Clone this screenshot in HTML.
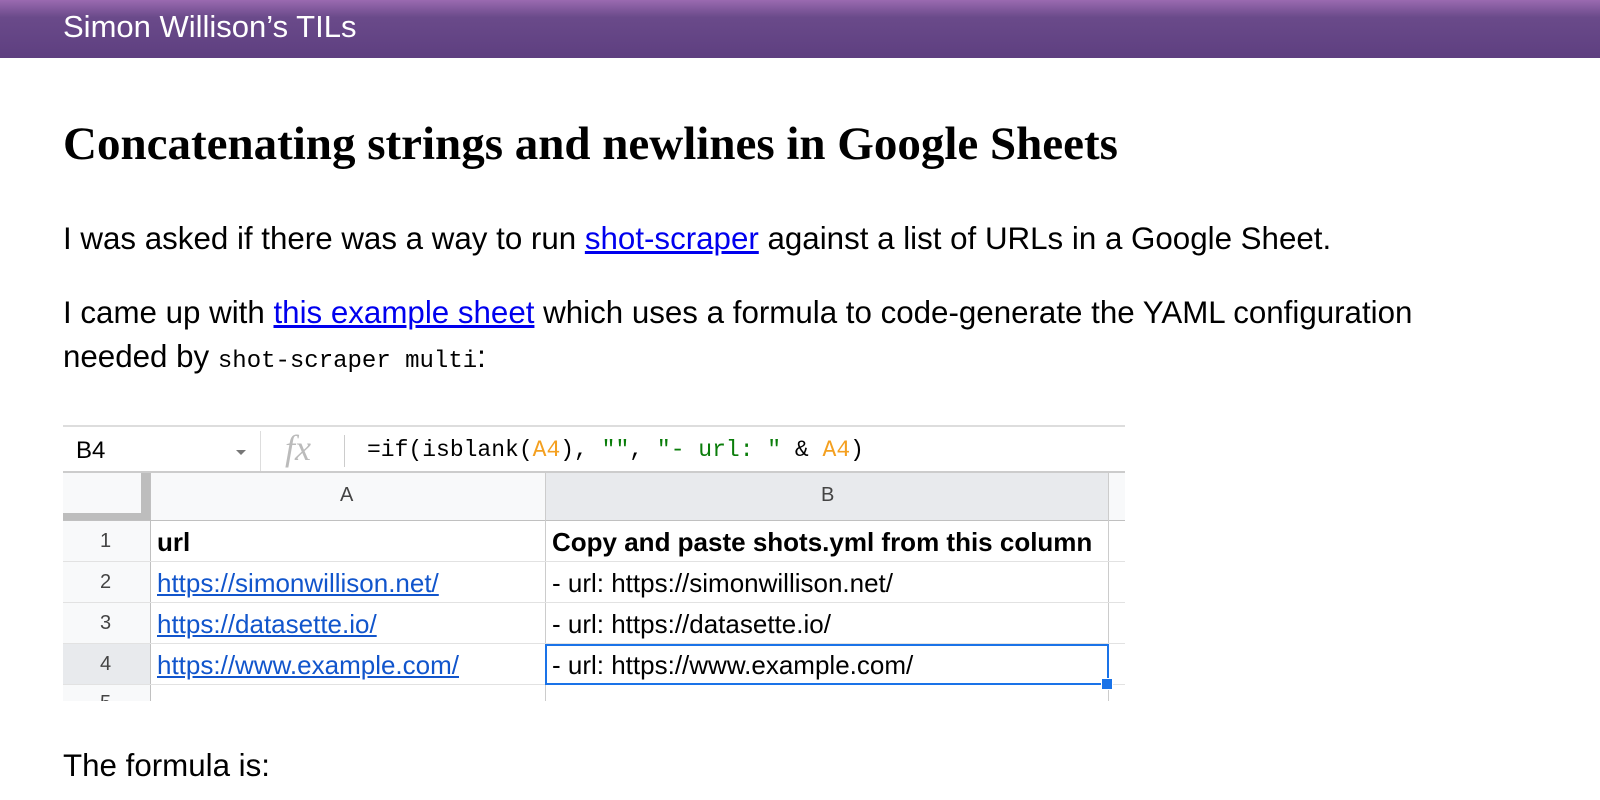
<!DOCTYPE html>
<html><head><meta charset="utf-8"><style>
body{margin:0;background:#fff;font-family:"Liberation Sans",sans-serif;width:1600px;height:800px;overflow:hidden;position:relative}
.hd{position:absolute;left:0;top:0;width:1600px;height:58px;background:linear-gradient(#9a6ab0,#6a4a8a 30%,#5e3f80);}
.hd span{position:absolute;left:63px;top:9px;color:#fff;font-size:31px}
h1{position:absolute;left:63px;top:117px;margin:0;font-family:"Liberation Serif",serif;font-size:47px;font-weight:bold}
p{position:absolute;left:63px;margin:0;font-size:31.3px;line-height:44px;width:1400px}
a{color:#0000ee}
code{font-family:"Liberation Mono",monospace;font-size:24px}
.a{position:absolute}
.sheet{position:absolute;left:63px;top:425px;width:1062px;height:276px;overflow:hidden;background:#fff;font-size:26px}
.t{position:absolute;white-space:nowrap}
</style></head><body>
<div class="hd"><span>Simon Willison’s TILs</span></div>
<h1>Concatenating strings and newlines in Google Sheets</h1>
<p style="top:217px">I was asked if there was a way to run <a href="#">shot-scraper</a> against a list of URLs in a Google Sheet.</p>
<p style="top:291px">I came up with <a href="#">this example sheet</a> which uses a formula to code-generate the YAML configuration needed by <code>shot-scraper multi</code>:</p>
<div class="sheet">
<div class="a" style="left:0;top:0;width:1062px;height:2px;background:#ddd"></div>
<div class="t" style="left:13px;top:12px;font-size:24px">B4</div>
<div class="a" style="left:173px;top:25px;border:5px solid transparent;border-top:5px solid #777"></div>
<div class="a" style="left:197px;top:6px;width:1px;height:40px;background:#ddd"></div>
<div class="t" style="left:222px;top:2px;font-family:'Liberation Serif',serif;font-style:italic;font-size:36px;color:#bbb">fx</div>
<div class="a" style="left:281px;top:10px;width:1px;height:32px;background:#ccc"></div>
<div class="t" style="left:304px;top:12px;font-family:'Liberation Mono',monospace;font-size:23px">=if(isblank(<span style="color:#f4a020">A4</span>), <span style="color:#0a7d0a">""</span>, <span style="color:#0a7d0a">"- url: "</span> &amp; <span style="color:#f4a020">A4</span>)</div>
<div class="a" style="left:0;top:46px;width:1062px;height:2px;background:#ccc"></div>
<div class="a" style="left:0;top:48px;width:1062px;height:47px;background:#f8f9fa"></div>
<div class="a" style="left:483px;top:48px;width:562px;height:47px;background:#e8eaed"></div>
<div class="a" style="left:0;top:48px;width:87px;height:47px;background:#f8f9fa"></div>
<div class="a" style="left:78px;top:48px;width:9px;height:47px;background:#bdbdbd"></div>
<div class="a" style="left:0;top:88px;width:87px;height:7px;background:#bdbdbd"></div>
<div class="t" style="left:277px;top:59px;font-size:20px;color:#444">A</div>
<div class="t" style="left:758px;top:59px;font-size:20px;color:#444">B</div>
<div class="a" style="left:0;top:95px;width:1062px;height:1px;background:#c0c0c0"></div>
<div class="a" style="left:0;top:96px;width:87px;height:180px;background:#f8f9fa"></div>
<div class="a" style="left:0;top:219px;width:87px;height:41px;background:#e8eaed"></div>
<div class="a" style="left:87px;top:48px;width:1px;height:228px;background:#c0c0c0"></div>
<div class="a" style="left:482px;top:48px;width:1px;height:228px;background:#ccc"></div>
<div class="a" style="left:1045px;top:48px;width:1px;height:228px;background:#ccc"></div>
<div class="a" style="left:0;top:136px;width:1062px;height:1px;background:#e2e2e2"></div>
<div class="a" style="left:0;top:177px;width:1062px;height:1px;background:#e2e2e2"></div>
<div class="a" style="left:0;top:218px;width:1062px;height:1px;background:#e2e2e2"></div>
<div class="a" style="left:0;top:259px;width:1062px;height:1px;background:#e2e2e2"></div>
<div class="t" style="left:37px;top:105px;font-size:20px;color:#444">1</div>
<div class="t" style="left:37px;top:146px;font-size:20px;color:#444">2</div>
<div class="t" style="left:37px;top:187px;font-size:20px;color:#444">3</div>
<div class="t" style="left:37px;top:228px;font-size:20px;color:#444">4</div>
<div class="t" style="left:37px;top:267px;font-size:20px;color:#444">5</div>
<div class="t" style="left:94px;top:102px;font-weight:bold">url</div>
<div class="t" style="left:489px;top:102px;font-weight:bold">Copy and paste shots.yml from this column</div>
<div class="t" style="left:94px;top:143px;color:#1155cc;text-decoration:underline">https://simonwillison.net/</div>
<div class="t" style="left:94px;top:184px;color:#1155cc;text-decoration:underline">https://datasette.io/</div>
<div class="t" style="left:94px;top:225px;color:#1155cc;text-decoration:underline">https://www.example.com/</div>
<div class="t" style="left:489px;top:143px">- url: https://simonwillison.net/</div>
<div class="t" style="left:489px;top:184px">- url: https://datasette.io/</div>
<div class="t" style="left:489px;top:225px">- url: https://www.example.com/</div>
<div class="a" style="left:482px;top:219px;width:560px;height:37px;border:2px solid #1a73e8"></div>
<div class="a" style="left:1038px;top:253px;width:10px;height:10px;background:#1a73e8;border:1px solid #fff"></div>
</div>
<p style="top:744px">The formula is:</p>
</body></html>
